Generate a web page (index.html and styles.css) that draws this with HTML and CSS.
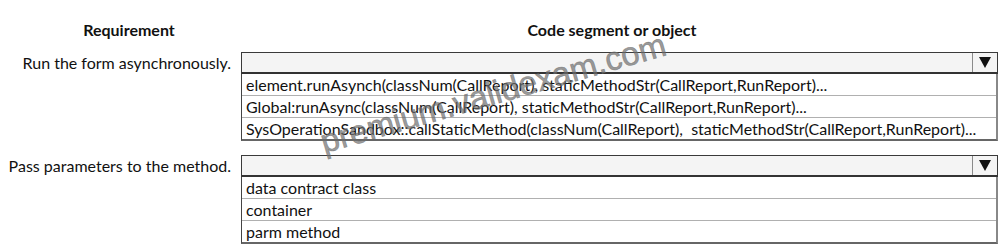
FILE: index.html
```html
<!DOCTYPE html>
<html>
<head>
<meta charset="utf-8">
<link rel="stylesheet" href="styles.css">
</head>
<body>
<div class="page">
  <div class="heads">
    <div class="head-req">Requirement</div>
    <div class="head-code">Code segment or object</div>
  </div>
  <div class="row">
    <div class="label">Run the form asynchronously.</div>
    <div class="dropdown">
      <div class="select"><div class="value"></div><div class="arrow"><span class="tri"></span></div></div>
      <div class="list">
        <div class="opt">element.runAsynch(classNum(CallReport), staticMethodStr(CallReport,RunReport)...</div>
        <div class="opt">Global:runAsync(classNum(CallReport), staticMethodStr(CallReport,RunReport)...</div>
        <div class="opt">SysOperationSandbox::callStaticMethod(classNum(CallReport),&nbsp; staticMethodStr(CallReport,RunReport)...</div>
      </div>
    </div>
  </div>
  <div class="row row2">
    <div class="label">Pass parameters to the method.</div>
    <div class="dropdown">
      <div class="select"><div class="value"></div><div class="arrow"><span class="tri"></span></div></div>
      <div class="list">
        <div class="opt">data contract class</div>
        <div class="opt">container</div>
        <div class="opt">parm method</div>
      </div>
    </div>
  </div>
  <div class="watermark">premium.validexam.com</div>
</div>
</body>
</html>
```
FILE: styles.css
```css
html, body {
  margin: 0;
  padding: 0;
  background: #fff;
}
.page {
  position: relative;
  width: 1001px;
  height: 249px;
  overflow: hidden;
  font-family: "Lato", "Open Sans", sans-serif;
  font-size: 16px;
  color: #111;
}
.heads {
  display: flex;
  padding-top: 20px;
  margin-bottom: 12px;
  font-weight: bold;
  font-size: 16px;
  line-height: 20px;
}
.head-req {
  width: 258px;
  text-align: center;
}
.head-code {
  width: 708px;
  text-align: center;
}
.row {
  display: flex;
  align-items: flex-start;
}
.row2 {
  margin-top: 14px;
}
.label {
  width: 231px;
  text-align: right;
  padding-right: 10px;
  line-height: 21px;
  white-space: nowrap;
}
.dropdown {
  width: 757px;
}
.select {
  display: flex;
  height: 19px;
  border: 1px solid #3a3a3a;
  border-bottom: 2px solid #333;
  background: #f4f4f4;
}
.value {
  flex: 1;
}
.arrow {
  width: 24px;
  border-left: 1px solid #8a8a8a;
  display: flex;
  align-items: center;
  justify-content: center;
}
.tri {
  width: 0;
  height: 0;
  border-left: 6px solid transparent;
  border-right: 6px solid transparent;
  border-top: 11px solid #111;
}
.list {
  border-left: 1px solid #444;
  border-right: 2px solid #888;
  border-bottom: 2px solid #666;
  background: #fff;
}
.opt {
  height: 21px;
  line-height: 21px;
  padding-left: 4px;
  border-bottom: 1px solid #b0b0b0;
  white-space: nowrap;
  overflow: hidden;
}
.opt:last-child {
  border-bottom: none;
}
.watermark {
  position: absolute;
  left: 326px;
  top: 125px;
  height: 34px;
  line-height: 34px;
  font-family: "Liberation Sans", Arial, sans-serif;
  font-size: 33px;
  color: rgba(110, 110, 110, 0.7);
  -webkit-text-stroke: 0.6px rgba(110, 110, 110, 0.7);
  transform: rotate(-16deg);
  transform-origin: left bottom;
  white-space: nowrap;
  pointer-events: none;
}
```
